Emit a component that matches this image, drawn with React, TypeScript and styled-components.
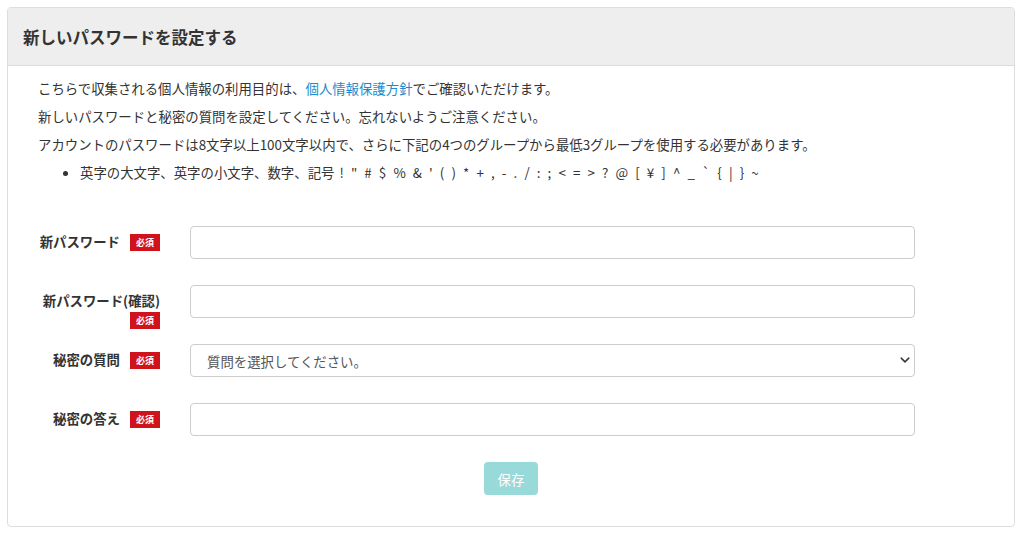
import styled, { createGlobalStyle } from "styled-components";

const GlobalStyle = createGlobalStyle`
  html, body {
    margin: 0;
    padding: 0;
    background: #fff;
  }
  body {
    font-family: "Noto Sans CJK JP", "Noto Sans", sans-serif;
    color: #333;
  }
  * { box-sizing: border-box; }
`;

const Page = styled.div`
  padding: 7px 9px 10px 7px;
`;

const Card = styled.div`
  border: 1px solid #ddd;
  border-radius: 4px;
  background: #fff;
  overflow: hidden;
`;

const CardHeader = styled.div`
  background: #eee;
  border-bottom: 1px solid #ddd;
  height: 58px;
  display: flex;
  align-items: center;
  padding: 0 15px;
`;

const Title = styled.h2`
  margin: 0;
  font-size: 16.5px;
  font-weight: 700;
  color: #333;
`;

const CardBody = styled.div`
  padding: 8px 30px 31px 30px;
`;

const Text = styled.p`
  margin: 0;
  font-size: 13.4px;
  line-height: 28px;
`;

const Link = styled.a`
  color: #1a8ccd;
  text-decoration: none;
`;

const List = styled.ul`
  margin: 0;
  padding-left: 42px;
  font-size: 13.4px;
  line-height: 28px;
`;

const Symbols = styled.span`
  letter-spacing: 2.05px;
`;

const Form = styled.form`
  margin-top: 40px;
  display: flex;
  flex-direction: column;
  gap: 26px;
`;

const Row = styled.div`
  display: flex;
  align-items: flex-start;
  height: 33px;
`;

const LabelCol = styled.div`
  width: 122px;
  text-align: right;
  padding-top: 5px;
  line-height: 18px;
`;

const Label = styled.span`
  font-size: 13.4px;
  font-weight: 700;
  color: #333;
`;

const Badge = styled.span`
  display: inline-block;
  margin-left: 10px;
  width: 30px;
  height: 17px;
  line-height: 17px;
  background: #d0121b;
  color: #fff;
  font-size: 9px;
  font-weight: 700;
  text-align: center;
  vertical-align: 1px;
`;

const Field = styled.div`
  margin-left: 30px;
  width: 725px;
  position: relative;
`;

const Input = styled.input`
  width: 100%;
  height: 33px;
  border: 1px solid #ccc;
  border-radius: 4px;
  padding: 0 12px;
  font-size: 13px;
  font-family: inherit;
  outline: none;
`;

const Select = styled.select`
  width: 100%;
  height: 33px;
  border: 1px solid #ccc;
  border-radius: 4px;
  padding: 0 12px 0 16px;
  font-size: 13.4px;
  font-family: inherit;
  color: #555;
  background: #fff;
  appearance: none;
  outline: none;
`;

const Chevron = styled.svg`
  position: absolute;
  right: 3px;
  top: 11px;
  pointer-events: none;
`;

const Actions = styled.div`
  display: flex;
  justify-content: center;
`;

const SaveButton = styled.button`
  width: 54px;
  height: 33px;
  border: none;
  border-radius: 4px;
  background: #98d9da;
  color: #fff;
  font-size: 13.4px;
  font-family: inherit;
`;

const fields = [
  { label: "新パスワード", type: "password" },
  { label: "新パスワード(確認)", type: "password" },
  { label: "秘密の質問", type: "select" },
  { label: "秘密の答え", type: "text" },
];

export default function App() {
  return (
    <>
      <GlobalStyle />
      <Page>
        <Card>
          <CardHeader>
            <Title>新しいパスワードを設定する</Title>
          </CardHeader>
          <CardBody>
            <Text>
              こちらで収集される個人情報の利用目的は、
              <Link href="#">個人情報保護方針</Link>でご確認いただけます。
            </Text>
            <Text>新しいパスワードと秘密の質問を設定してください。忘れないようご注意ください。</Text>
            <Text>
              アカウントのパスワードは8文字以上100文字以内で、さらに下記の4つのグループから最低3グループを使用する必要があります。
            </Text>
            <List>
              <li>
                英字の大文字、英字の小文字、数字、記号
                <Symbols>{' ! " # $ % & \' ( ) * + , - . / : ; < = > ? @ [ ¥ ] ^ _ ` { | } ~'}</Symbols>
              </li>
            </List>
            <Form onSubmit={(e) => e.preventDefault()}>
              {fields.map((f) => (
                <Row key={f.label}>
                  <LabelCol>
                    <Label>{f.label}</Label>
                    <Badge>必須</Badge>
                  </LabelCol>
                  <Field>
                    {f.type === "select" ? (
                      <>
                        <Select defaultValue="">
                          <option value="">質問を選択してください。</option>
                        </Select>
                        <Chevron width="14" height="10" viewBox="0 0 16 16">
                          <path d="M2 5l6 6 6-6" fill="none" stroke="#343a40" strokeWidth="2.4" strokeLinecap="round" strokeLinejoin="round" />
                        </Chevron>
                      </>
                    ) : (
                      <Input type={f.type} />
                    )}
                  </Field>
                </Row>
              ))}
              <Actions>
                <SaveButton type="submit" disabled>
                  保存
                </SaveButton>
              </Actions>
            </Form>
          </CardBody>
        </Card>
      </Page>
    </>
  );
}
